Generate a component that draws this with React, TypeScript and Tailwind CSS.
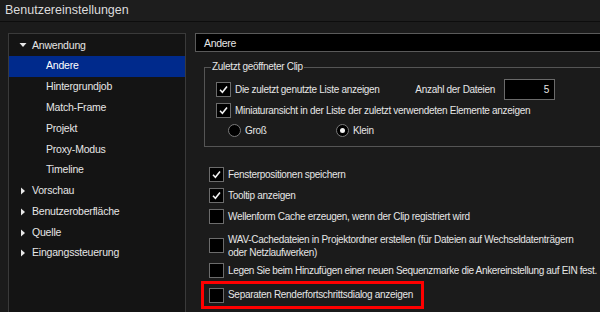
import React from "react";

type TreeItem = { label: string; level: 0 | 1; arrow?: "down" | "right"; selected?: boolean };

const tree: TreeItem[] = [
  { label: "Anwendung", level: 0, arrow: "down" },
  { label: "Andere", level: 1, selected: true },
  { label: "Hintergrundjob", level: 1 },
  { label: "Match-Frame", level: 1 },
  { label: "Projekt", level: 1 },
  { label: "Proxy-Modus", level: 1 },
  { label: "Timeline", level: 1 },
  { label: "Vorschau", level: 0, arrow: "right" },
  { label: "Benutzeroberfläche", level: 0, arrow: "right" },
  { label: "Quelle", level: 0, arrow: "right" },
  { label: "Eingangssteuerung", level: 0, arrow: "right" },
];

function Arrow({ dir }: { dir: "down" | "right" }) {
  return dir === "down" ? (
    <svg width="8" height="8" viewBox="0 0 8 8" className="shrink-0">
      <path d="M0.5 2 L7.5 2 L4 6 Z" fill="#e8e8e8" />
    </svg>
  ) : (
    <svg width="8" height="8" viewBox="0 0 8 8" className="shrink-0">
      <path d="M2 0.5 L6 4 L2 7.5 Z" fill="#e8e8e8" />
    </svg>
  );
}

function Check({ checked }: { checked?: boolean }) {
  return (
    <span className="flex h-[15px] w-[15px] shrink-0 items-center justify-center border border-[#6c6c6c] bg-black">
      {checked ? (
        <svg width="9" height="9" viewBox="0 0 9 9">
          <path d="M1 4.8 L3.4 7.2 L8 1.6" fill="none" stroke="#f2f2f2" strokeWidth="1.6" />
        </svg>
      ) : null}
    </span>
  );
}

function Radio({ checked }: { checked?: boolean }) {
  return (
    <span className="flex h-[13px] w-[13px] shrink-0 items-center justify-center rounded-full border border-[#7a7a7a] bg-black">
      {checked ? <span className="h-[5px] w-[5px] rounded-full bg-[#f2f2f2]" /> : null}
    </span>
  );
}

function Option(props: { label: React.ReactNode; checked?: boolean; className?: string }) {
  return (
    <div className={"flex items-center gap-[4px] whitespace-nowrap " + (props.className ?? "")}>
      <Check checked={props.checked} />
      <span>{props.label}</span>
    </div>
  );
}

export default function App() {
  return (
    <div
      className="flex h-[312px] w-[600px] flex-col overflow-hidden whitespace-nowrap bg-[#1b1b1b] text-[#e6e6e6]"
      style={{ fontFamily: '"Liberation Sans", Arial, sans-serif' }}
    >
      <div className="flex h-[22px] shrink-0 items-center border-b border-[#0d0d0d] bg-[#1d1d1d] pl-[5px] text-[12.5px] text-[#dcdcdc]">
        Benutzereinstellungen
      </div>

      <div className="flex min-h-0 flex-1 pt-[11px]">
        <div className="ml-[8px] w-[178px] shrink-0 border border-b-0 border-[#3a3a3a] bg-[#141414] pt-[1px] text-[10.5px] tracking-[-0.2px]">
          {tree.map((item) => (
            <div
              key={item.label}
              className={
                "flex h-[20.8px] items-center " +
                (item.selected ? "bg-[#002a8c] text-white " : "") +
                (item.level === 0 ? "pl-[10px]" : "pl-[37px]")
              }
            >
              {item.arrow ? <Arrow dir={item.arrow} /> : null}
              <span className={item.level === 0 ? "ml-[5px]" : ""}>{item.label}</span>
            </div>
          ))}
        </div>

        <div className="ml-[9px] flex min-w-0 flex-1 flex-col text-[10px] leading-[12px] tracking-[-0.3px]">
          <div className="-mr-[20px] flex h-[19px] shrink-0 items-center border border-[#5a5a5a] bg-black pl-[8px] text-[10.5px]">
            Andere
          </div>

          <fieldset className="-mr-[20px] mt-[9px] ml-[9px] h-[86px] border border-[#555555] pl-[11px] pr-0">
            <legend className="ml-[-5px] px-[1px]">Zuletzt geöffneter Clip</legend>
            <div className="mt-[6px] flex h-[21px] items-center">
              <Option checked label="Die zuletzt genutzte Liste anzeigen" />
              <span className="ml-auto mr-[9px]">Anzahl der Dateien</span>
              <span className="mr-[64px] flex h-[21px] w-[51px] items-center justify-end border border-[#6a6a6a] bg-black pr-[5px]">
                5
              </span>
            </div>
            <Option
              checked
              className="h-[21px]"
              label="Miniaturansicht in der Liste der zuletzt verwendeten Elemente anzeigen"
            />
            <div className="flex h-[19px] items-center pl-[12px]">
              <div className="flex w-[108px] items-center gap-[4px]">
                <Radio />
                <span>Groß</span>
              </div>
              <div className="flex items-center gap-[4px]">
                <Radio checked />
                <span>Klein</span>
              </div>
            </div>
          </fieldset>

          <div className="ml-[14px] mt-[17px] flex flex-col">
            <Option checked className="h-[21px]" label="Fensterpositionen speichern" />
            <Option checked className="h-[21px]" label="Tooltip anzeigen" />
            <Option className="h-[21px]" label="Wellenform Cache erzeugen, wenn der Clip registriert wird" />
            <div className="mt-[4px] flex h-[29px] items-center gap-[4px]">
              <Check />
              <span className="leading-[13px]">
                WAV-Cachedateien in Projektordner erstellen (für Dateien auf Wechseldatenträgern
                <br />
                oder Netzlaufwerken)
              </span>
            </div>
            <Option
              className="h-[21px] tracking-[-0.35px]"
              label="Legen Sie beim Hinzufügen einer neuen Sequenzmarke die Ankereinstellung auf EIN fest."
            />
            <div className="-ml-[8px] mt-[0px] flex h-[28px] w-[223px] items-center border-[3px] border-[#ff0000] pl-[5px]">
              <Option label="Separaten Renderfortschrittsdialog anzeigen" />
            </div>
          </div>
        </div>
      </div>
    </div>
  );
}
